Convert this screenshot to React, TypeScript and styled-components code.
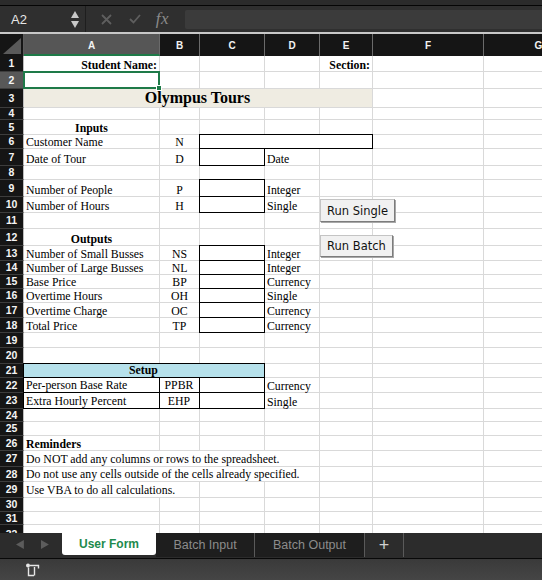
import React from "react";
import styled, { createGlobalStyle } from "styled-components";

const GlobalStyle = createGlobalStyle`
  html, body {
    margin: 0;
    padding: 0;
    background: #2a2a2a;
  }
  * {
    box-sizing: border-box;
  }
`;

const COL_WIDTHS = [24, 136, 40, 65, 55, 53, 111, 110];
const ROW_HEIGHTS = [
  16, 17, 19, 12, 15, 14, 17, 14, 17, 16, 16, 17, 15, 14, 14, 14, 15, 15, 15, 16, 14, 15, 16, 13,
  14, 15, 16, 15, 16, 14, 13, 20,
];
const LETTERS = ["A", "B", "C", "D", "E", "F", "G"];
const GRID = "#d9d9d9";

type Entry = {
  row: number;
  col: number;
  span?: number;
  text?: string;
  align?: "left" | "center" | "right";
  bold?: boolean;
  size?: number;
  fill?: string;
  boxed?: boolean;
};

const t = (row: number, col: number, text: string, extra: Partial<Entry> = {}): Entry => ({
  row,
  col,
  text,
  ...extra,
});
const box = (row: number, col: number, span = 1): Entry => ({ row, col, span, boxed: true });

const ENTRIES: Entry[] = [
  t(1, 1, "Student Name:", { align: "right", bold: true }),
  t(1, 5, "Section:", { align: "right", bold: true }),
  t(3, 1, "Olympus Tours", { span: 5, align: "center", bold: true, size: 16, fill: "#efece2" }),
  t(5, 1, "Inputs", { align: "center", bold: true }),
  t(6, 1, "Customer Name"),
  t(6, 2, "N", { align: "center" }),
  box(6, 3, 3),
  t(7, 1, "Date of Tour"),
  t(7, 2, "D", { align: "center" }),
  box(7, 3),
  t(7, 4, "Date"),
  t(9, 1, "Number of People"),
  t(9, 2, "P", { align: "center" }),
  box(9, 3),
  t(9, 4, "Integer"),
  t(10, 1, "Number of Hours"),
  t(10, 2, "H", { align: "center" }),
  box(10, 3),
  t(10, 4, "Single"),
  t(12, 1, "Outputs", { align: "center", bold: true }),
  t(13, 1, "Number of Small Busses"),
  t(13, 2, "NS", { align: "center" }),
  box(13, 3),
  t(13, 4, "Integer"),
  t(14, 1, "Number of Large Busses"),
  t(14, 2, "NL", { align: "center" }),
  box(14, 3),
  t(14, 4, "Integer"),
  t(15, 1, "Base Price"),
  t(15, 2, "BP", { align: "center" }),
  box(15, 3),
  t(15, 4, "Currency"),
  t(16, 1, "Overtime Hours"),
  t(16, 2, "OH", { align: "center" }),
  box(16, 3),
  t(16, 4, "Single"),
  t(17, 1, "Overtime Charge"),
  t(17, 2, "OC", { align: "center" }),
  box(17, 3),
  t(17, 4, "Currency"),
  t(18, 1, "Total Price"),
  t(18, 2, "TP", { align: "center" }),
  box(18, 3),
  t(18, 4, "Currency"),
  t(21, 1, "Setup", { span: 3, align: "center", bold: true, fill: "#b6e1eb", boxed: true }),
  t(22, 1, "Per-person Base Rate", { boxed: true }),
  t(22, 2, "PPBR", { align: "center", boxed: true }),
  box(22, 3),
  t(22, 4, "Currency"),
  t(23, 1, "Extra Hourly Percent", { boxed: true }),
  t(23, 2, "EHP", { align: "center", boxed: true }),
  box(23, 3),
  t(23, 4, "Single"),
  t(26, 1, "Reminders", { bold: true }),
  t(27, 1, "Do NOT add any columns or rows to the spreadsheet.", { span: 4, fill: "#fff" }),
  t(28, 1, "Do not use any cells outside of the cells already specified.", { span: 4, fill: "#fff" }),
  t(29, 1, "Use VBA to do all calculations.", { span: 2, fill: "#fff" }),
];

/* ---------- window chrome ---------- */

const Page = styled.div`
  width: 542px;
  height: 580px;
  overflow: hidden;
  display: flex;
  flex-direction: column;
  background: #2a2a2a;
  font-family: "Liberation Sans", Arial, sans-serif;
`;

const TopStrip = styled.div`
  height: 6px;
  flex: none;
  background: #2b2b2b;
  border-bottom: 1px solid #050505;
`;

const FormulaBar = styled.div`
  height: 26px;
  flex: none;
  display: flex;
  align-items: center;
  background: #2f2f2f;
`;

const NameBox = styled.div`
  width: 86px;
  height: 100%;
  display: flex;
  align-items: center;
  justify-content: space-between;
  padding: 0 6px 0 11px;
  border-right: 1px solid #1e1e1e;
  color: #e6e6e6;
  font-size: 13px;
`;

const Stepper = styled.div`
  display: flex;
  flex-direction: column;
  gap: 3px;
`;

const IconSlot = styled.div<{ $w: number }>`
  width: ${(p) => p.$w}px;
  display: flex;
  justify-content: center;
  align-items: center;
`;

const Fx = styled.span`
  font-family: "Liberation Serif", "Times New Roman", serif;
  font-style: italic;
  font-size: 17px;
  color: #8a8a8a;
  letter-spacing: 0.5px;
`;

const FormulaInput = styled.div`
  flex: 1;
  height: 19px;
  margin-left: 4px;
  background: #3b3b3b;
  border-radius: 2px 0 0 2px;
`;

const Divider = styled.div`
  height: 2px;
  flex: none;
  background: #c8c8c8;
`;

/* ---------- sheet ---------- */

const Sheet = styled.div`
  position: relative;
  height: 499px;
  flex: none;
  overflow: hidden;
  background: #fff;
`;

const Grid = styled.div`
  display: grid;
  grid-template-columns: ${COL_WIDTHS.map((w) => `${w}px`).join(" ")};
  grid-template-rows: 22px ${ROW_HEIGHTS.map((h) => `${h}px`).join(" ")};
  width: max-content;
`;

const Corner = styled.div`
  grid-row: 1;
  grid-column: 1;
  background: #151515;
  border-right: 1px solid #5c5c5c;
  display: flex;
  align-items: flex-end;
  justify-content: flex-end;
  padding: 0 2px 2px 0;
`;

const ColHead = styled.div<{ $col: number; $active?: boolean }>`
  grid-row: 1;
  grid-column: ${(p) => p.$col};
  background: ${(p) => (p.$active ? "#565656" : "#151515")};
  border-right: 1px solid #6a6a6a;
  border-bottom: ${(p) => (p.$active ? "2px solid #1e7a48" : "none")};
  color: #f2f2f2;
  font-size: 10px;
  font-weight: bold;
  display: flex;
  align-items: center;
  justify-content: center;
  padding-top: ${(p) => (p.$active ? "2px" : "0")};
`;

const RowHead = styled.div<{ $row: number; $active?: boolean }>`
  grid-row: ${(p) => p.$row};
  grid-column: 1;
  background: ${(p) => (p.$active ? "#585858" : "#151515")};
  border-bottom: 1px solid #3d3d3d;
  border-right: 1px solid #bdbdbd;
  color: #f4f4f4;
  font-size: 10.5px;
  font-weight: bold;
  display: flex;
  align-items: center;
  justify-content: center;
  line-height: 1;
`;

const BaseCell = styled.div<{ $row: number; $col: number }>`
  grid-row: ${(p) => p.$row};
  grid-column: ${(p) => p.$col};
  border-right: 1px solid ${GRID};
  border-bottom: 1px solid ${GRID};
`;

const Cell = styled.div<{
  $row: number;
  $col: number;
  $span: number;
  $align: string;
  $bold?: boolean;
  $size: number;
  $fill?: string;
  $boxed?: boolean;
}>`
  grid-row: ${(p) => p.$row};
  grid-column: ${(p) => p.$col} / span ${(p) => p.$span};
  display: flex;
  align-items: flex-end;
  justify-content: ${(p) =>
    p.$align === "center" ? "center" : p.$align === "right" ? "flex-end" : "flex-start"};
  padding: 0 3px 0 2px;
  white-space: nowrap;
  font-family: "Liberation Serif", "Times New Roman", serif;
  font-size: ${(p) => p.$size}px;
  line-height: ${(p) => (p.$size > 14 ? 18 : 13)}px;
  font-weight: ${(p) => (p.$bold ? "bold" : "normal")};
  color: #000;
  background: ${(p) => p.$fill ?? (p.$boxed ? "#fff" : "transparent")};
  ${(p) =>
    p.$boxed
      ? "border: 1px solid #000; margin: -1px 0 0 -1px;"
      : p.$fill
        ? `border-right: 1px solid ${GRID}; border-bottom: 1px solid ${GRID};`
        : ""}
`;

const Selection = styled.div`
  position: relative;
  grid-row: 3;
  grid-column: 2;
  margin: -1px 0 0 -1px;
  border: 2px solid #1e7a48;
`;

const Handle = styled.span`
  position: absolute;
  right: -4px;
  bottom: -4px;
  width: 6px;
  height: 6px;
  background: #1e7a48;
  border: 1px solid #fff;
`;

const MacroButton = styled.button<{ $top: number; $w: number; $h: number }>`
  position: absolute;
  left: 320px;
  top: ${(p) => p.$top}px;
  width: ${(p) => p.$w}px;
  height: ${(p) => p.$h}px;
  padding: 0;
  background: #f1f1f1;
  border: 1px solid #c4c4c4;
  border-right-color: #7c7c7c;
  border-bottom-color: #7c7c7c;
  box-shadow: 1px 1px 0 #a8a8a8;
  font-family: "DejaVu Sans", "Liberation Sans", sans-serif;
  font-size: 11.5px;
  color: #111;
`;

/* ---------- sheet tabs + status ---------- */

const TabBar = styled.div`
  height: 25px;
  flex: none;
  display: flex;
  background: #2c2c2c;
`;

const TabNav = styled.div`
  width: 62px;
  display: flex;
  align-items: center;
  gap: 16px;
  padding: 0 0 2px 16px;
`;

const Tab = styled.div<{ $active?: boolean; $w: number }>`
  width: ${(p) => p.$w}px;
  height: ${(p) => (p.$active ? "22px" : "24px")};
  display: flex;
  align-items: center;
  justify-content: center;
  background: ${(p) => (p.$active ? "#fff" : "#1e1e1e")};
  border-right: ${(p) => (p.$active ? "none" : "1px solid #5a5a5a")};
  border-radius: ${(p) => (p.$active ? "0 0 3px 3px" : "0")};
  color: ${(p) => (p.$active ? "#1d8a4d" : "#8c8c8c")};
  font-size: ${(p) => (p.$active ? "12px" : "12.5px")};
  font-weight: ${(p) => (p.$active ? "bold" : "normal")};
`;

const AddTab = styled.div`
  width: 39px;
  height: 24px;
  display: flex;
  align-items: center;
  justify-content: center;
  border-right: 1px solid #5a5a5a;
  color: #d0d0d0;
  font-size: 18px;
`;

const StatusBar = styled.div`
  height: 22px;
  flex: none;
  border-top: 1px solid #080808;
  background: linear-gradient(#3a3a3a, #454545);
  display: flex;
  align-items: center;
  padding-left: 25px;
`;

const Tri = ({ dir, color, size = 8 }: { dir: "up" | "down" | "left" | "right"; color: string; size?: number }) => {
  const pts = {
    up: "0,8 4,1 8,8",
    down: "0,0 8,0 4,7",
    left: "7,0 7,8 0,4",
    right: "0,0 0,8 7,4",
  }[dir];
  return (
    <svg width={size} height={size} viewBox="0 0 8 8">
      <polygon points={pts} fill={color} />
    </svg>
  );
};

const App: React.FC = () => {
  return (
    <>
      <GlobalStyle />
      <Page>
        <TopStrip />
        <FormulaBar>
          <NameBox>
            <span>A2</span>
            <Stepper>
              <Tri dir="up" color="#c9c9c9" size={8} />
              <Tri dir="down" color="#c9c9c9" size={8} />
            </Stepper>
          </NameBox>
          <IconSlot $w={40}>
            <svg width="11" height="11" viewBox="0 0 11 11">
              <path d="M1 1 L10 10 M10 1 L1 10" stroke="#5e5e5e" strokeWidth="1.8" />
            </svg>
          </IconSlot>
          <IconSlot $w={18}>
            <svg width="12" height="10" viewBox="0 0 12 10">
              <path d="M1 5 L4.5 8.5 L11 1" stroke="#5e5e5e" strokeWidth="1.8" fill="none" />
            </svg>
          </IconSlot>
          <IconSlot $w={37}>
            <Fx>fx</Fx>
          </IconSlot>
          <FormulaInput />
        </FormulaBar>
        <Divider />
        <Sheet>
          <Grid>
            <Corner>
              <svg width="18" height="16" viewBox="0 0 18 16">
                <polygon points="18,0 18,16 0,16" fill="#5a5a5a" />
              </svg>
            </Corner>
            {LETTERS.map((l, i) => (
              <ColHead key={l} $col={i + 2} $active={i === 0}>
                {l}
              </ColHead>
            ))}
            {ROW_HEIGHTS.map((_, r) => (
              <React.Fragment key={r}>
                <RowHead $row={r + 2} $active={r === 1}>
                  {r + 1}
                </RowHead>
                {LETTERS.map((_, c) => (
                  <BaseCell key={c} $row={r + 2} $col={c + 2} />
                ))}
              </React.Fragment>
            ))}
            {ENTRIES.map((e, i) => (
              <Cell
                key={i}
                $row={e.row + 1}
                $col={e.col + 1}
                $span={e.span ?? 1}
                $align={e.align ?? "left"}
                $bold={e.bold}
                $size={e.size ?? 11.8}
                $fill={e.fill}
                $boxed={e.boxed}
              >
                {e.text}
              </Cell>
            ))}
            <Selection>
              <Handle />
            </Selection>
          </Grid>
          <MacroButton $top={165} $w={75} $h={23}>
            Run Single
          </MacroButton>
          <MacroButton $top={201} $w={73} $h={22}>
            Run Batch
          </MacroButton>
        </Sheet>
        <TabBar>
          <TabNav>
            <Tri dir="left" color="#5c5c5c" size={9} />
            <Tri dir="right" color="#5c5c5c" size={9} />
          </TabNav>
          <Tab $active $w={94}>
            User Form
          </Tab>
          <Tab $w={99}>Batch Input</Tab>
          <Tab $w={110}>Batch Output</Tab>
          <AddTab>+</AddTab>
        </TabBar>
        <StatusBar>
          <svg width="16" height="14" viewBox="0 0 16 14">
            <circle cx="3" cy="2.5" r="2" fill="#e6e6e6" />
            <path d="M5 2.5 H13.5 V5.5" stroke="#e6e6e6" strokeWidth="1.4" fill="none" />
            <path d="M3.5 4.5 V12.5 H9 M9.5 4 V12.5" stroke="#e6e6e6" strokeWidth="1.4" fill="none" />
          </svg>
        </StatusBar>
      </Page>
    </>
  );
};

export default App;
